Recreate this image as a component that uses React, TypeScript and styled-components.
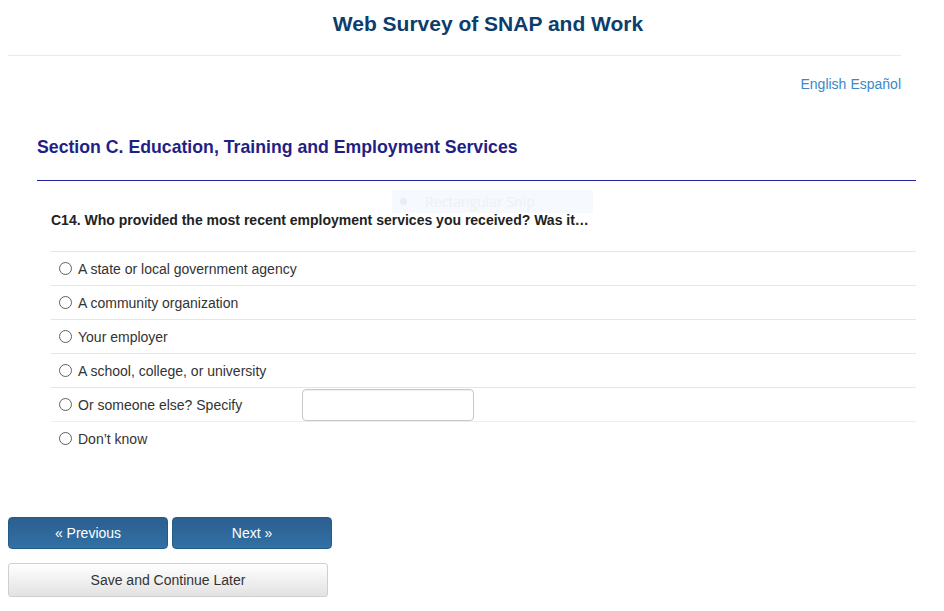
import * as React from "react";
import styled, { createGlobalStyle } from "styled-components";

const GlobalStyle = createGlobalStyle`
  html, body {
    margin: 0;
    padding: 0;
    background: #fff;
  }
  body {
    font-family: "Liberation Sans", Arial, sans-serif;
    color: #333;
  }
`;

const Page = styled.div`
  position: relative;
  width: 944px;
  min-height: 611px;
  padding: 0 8px;
  box-sizing: border-box;
`;

const Header = styled.header`
  width: 893px;
  padding: 12px 0 19px;
  border-bottom: 1px solid #eaeaea;
`;

const Title = styled.h1`
  margin: 0;
  padding-left: 67px;
  text-align: center;
  font-size: 21px;
  line-height: 24px;
  font-weight: bold;
  color: #0c3d6d;
`;

const LangBar = styled.div`
  width: 893px;
  display: flex;
  justify-content: flex-end;
  gap: 4px;
  padding-top: 18px;
  font-size: 14px;
  line-height: 20px;
`;

const LangLink = styled.a`
  color: #3a87c9;
  text-decoration: none;
  cursor: pointer;
`;

const Section = styled.section`
  margin-left: 29px;
  width: 879px;
`;

const SectionTitle = styled.h2`
  margin: 41px 0 0;
  padding-bottom: 21px;
  border-bottom: 1px solid #23239b;
  font-size: 17.7px;
  line-height: 24px;
  font-weight: bold;
  color: #1f1f86;
`;

const Question = styled.div`
  padding: 30px 0 0 14px;
  font-size: 14px;
  line-height: 18px;
  font-weight: bold;
  color: #222;
`;

const Options = styled.div`
  margin: 22px 0 0 14px;
`;

const OptionRow = styled.label<{ $last?: boolean }>`
  display: flex;
  align-items: center;
  height: 33px;
  border-top: 1px solid ${(p) => (p.$last ? "#eeeeee" : "#e6e6e6")};
  padding-left: 8px;
  font-size: 14px;
  color: #333;
  cursor: pointer;
`;

const Radio = styled.span`
  width: 11px;
  height: 11px;
  border: 1px solid #5f5f5f;
  border-radius: 50%;
  background: #fff;
  margin-right: 6px;
  flex-shrink: 0;
`;

const OptionText = styled.span<{ $width?: number }>`
  width: ${(p) => (p.$width ? `${p.$width}px` : "auto")};
`;

const SpecifyInput = styled.input`
  width: 172px;
  height: 32px;
  box-sizing: border-box;
  border: 1px solid #c8c8c8;
  border-radius: 4px;
  box-shadow: inset 0 1px 1px rgba(0, 0, 0, 0.06);
  padding: 4px 8px;
  font-family: inherit;
  font-size: 14px;
`;

const NavRow = styled.div`
  display: flex;
  gap: 4px;
  margin-top: 62px;
`;

const NavButton = styled.button`
  width: 160px;
  height: 32px;
  border: 1px solid #245a88;
  border-radius: 4px;
  background: linear-gradient(to bottom, #2b5f8f 0%, #3270a6 100%);
  color: #fff;
  font-family: inherit;
  font-size: 14px;
  cursor: pointer;
`;

const SaveButton = styled.button`
  display: block;
  margin-top: 14px;
  width: 320px;
  height: 34px;
  border: 1px solid #cfcfcf;
  border-radius: 3px;
  background: linear-gradient(to bottom, #ffffff 0%, #e2e2e2 100%);
  color: #333;
  font-family: inherit;
  font-size: 14px;
  cursor: pointer;
`;

const SnipGhost = styled.div`
  position: absolute;
  left: 392px;
  top: 190px;
  width: 201px;
  height: 23px;
  display: flex;
  align-items: center;
  gap: 18px;
  padding-left: 8px;
  box-sizing: border-box;
  background: #f6f9fe;
  color: #edf1f8;
  font-family: "Segoe UI", "Open Sans", sans-serif;
  font-size: 14px;
`;

const GhostDot = styled.span`
  width: 7px;
  height: 7px;
  border-radius: 50%;
  background: #e8eef8;
`;

const options = [
  "A state or local government agency",
  "A community organization",
  "Your employer",
  "A school, college, or university",
];

export default function App() {
  return (
    <Page>
      <GlobalStyle />
      <Header>
        <Title>Web Survey of SNAP and Work</Title>
      </Header>
      <LangBar>
        <LangLink>English</LangLink>
        <LangLink>Español</LangLink>
      </LangBar>

      <Section>
        <SectionTitle>Section C. Education, Training and Employment Services</SectionTitle>
        <Question>
          C14. Who provided the most recent employment services you received? Was it…
        </Question>
        <Options>
          {options.map((o) => (
            <OptionRow key={o}>
              <Radio />
              <OptionText>{o}</OptionText>
            </OptionRow>
          ))}
          <OptionRow>
            <Radio />
            <OptionText $width={224}>Or someone else? Specify</OptionText>
            <SpecifyInput type="text" />
          </OptionRow>
          <OptionRow $last>
            <Radio />
            <OptionText>Don’t know</OptionText>
          </OptionRow>
        </Options>
      </Section>

      <NavRow>
        <NavButton>« Previous</NavButton>
        <NavButton>Next »</NavButton>
      </NavRow>
      <SaveButton>Save and Continue Later</SaveButton>

      <SnipGhost>
        <GhostDot />
        Rectangular Snip
      </SnipGhost>
    </Page>
  );
}
